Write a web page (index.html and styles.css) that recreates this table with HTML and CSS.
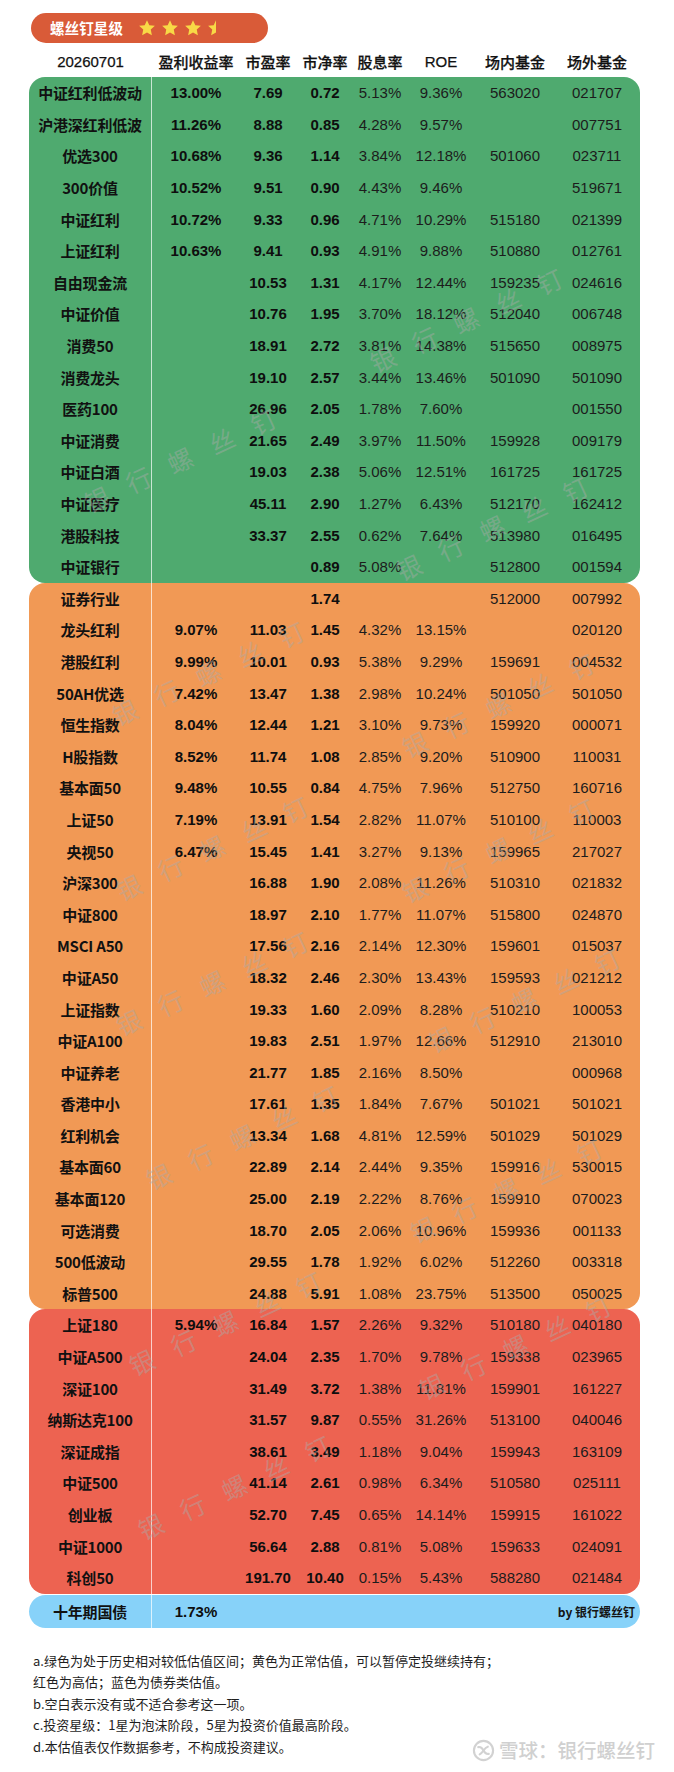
FILE: index.html
```html
<!DOCTYPE html>
<html lang="zh-CN">
<head>
<meta charset="utf-8">
<title>螺丝钉星级</title>
<link rel="stylesheet" href="styles.css">
</head>
<body>
<div class="page">
  <div class="badge">
    <span class="badge-title">螺丝钉星级</span>
    <span class="stars">
      <svg class="star" viewBox="0 0 24 24"><polygon points="12,1.5 15.1,8.3 22.5,9.1 17,14.1 18.5,21.8 12,17.9 5.5,21.8 7,14.1 1.5,9.1 8.9,8.3"/></svg>
      <svg class="star" viewBox="0 0 24 24"><polygon points="12,1.5 15.1,8.3 22.5,9.1 17,14.1 18.5,21.8 12,17.9 5.5,21.8 7,14.1 1.5,9.1 8.9,8.3"/></svg>
      <svg class="star" viewBox="0 0 24 24"><polygon points="12,1.5 15.1,8.3 22.5,9.1 17,14.1 18.5,21.8 12,17.9 5.5,21.8 7,14.1 1.5,9.1 8.9,8.3"/></svg>
      <svg class="star half" viewBox="0 0 24 24"><polygon points="12,1.5 12,17.9 5.5,21.8 7,14.1 1.5,9.1 8.9,8.3"/></svg>
    </span>
  </div>

  <div class="thead">
    <span>20260701</span><span>盈利收益率</span><span>市盈率</span><span>市净率</span><span>股息率</span><span>ROE</span><span>场内基金</span><span>场外基金</span>
  </div>

  <div class="block green">
    <div class="row"><span class="name">中证红利低波动</span><span class="b">13.00%</span><span class="b">7.69</span><span class="b">0.72</span><span>5.13%</span><span>9.36%</span><span>563020</span><span>021707</span></div>
    <div class="row"><span class="name">沪港深红利低波</span><span class="b">11.26%</span><span class="b">8.88</span><span class="b">0.85</span><span>4.28%</span><span>9.57%</span><span></span><span>007751</span></div>
    <div class="row"><span class="name">优选300</span><span class="b">10.68%</span><span class="b">9.36</span><span class="b">1.14</span><span>3.84%</span><span>12.18%</span><span>501060</span><span>023711</span></div>
    <div class="row"><span class="name">300价值</span><span class="b">10.52%</span><span class="b">9.51</span><span class="b">0.90</span><span>4.43%</span><span>9.46%</span><span></span><span>519671</span></div>
    <div class="row"><span class="name">中证红利</span><span class="b">10.72%</span><span class="b">9.33</span><span class="b">0.96</span><span>4.71%</span><span>10.29%</span><span>515180</span><span>021399</span></div>
    <div class="row"><span class="name">上证红利</span><span class="b">10.63%</span><span class="b">9.41</span><span class="b">0.93</span><span>4.91%</span><span>9.88%</span><span>510880</span><span>012761</span></div>
    <div class="row"><span class="name">自由现金流</span><span class="b"></span><span class="b">10.53</span><span class="b">1.31</span><span>4.17%</span><span>12.44%</span><span>159235</span><span>024616</span></div>
    <div class="row"><span class="name">中证价值</span><span class="b"></span><span class="b">10.76</span><span class="b">1.95</span><span>3.70%</span><span>18.12%</span><span>512040</span><span>006748</span></div>
    <div class="row"><span class="name">消费50</span><span class="b"></span><span class="b">18.91</span><span class="b">2.72</span><span>3.81%</span><span>14.38%</span><span>515650</span><span>008975</span></div>
    <div class="row"><span class="name">消费龙头</span><span class="b"></span><span class="b">19.10</span><span class="b">2.57</span><span>3.44%</span><span>13.46%</span><span>501090</span><span>501090</span></div>
    <div class="row"><span class="name">医药100</span><span class="b"></span><span class="b">26.96</span><span class="b">2.05</span><span>1.78%</span><span>7.60%</span><span></span><span>001550</span></div>
    <div class="row"><span class="name">中证消费</span><span class="b"></span><span class="b">21.65</span><span class="b">2.49</span><span>3.97%</span><span>11.50%</span><span>159928</span><span>009179</span></div>
    <div class="row"><span class="name">中证白酒</span><span class="b"></span><span class="b">19.03</span><span class="b">2.38</span><span>5.06%</span><span>12.51%</span><span>161725</span><span>161725</span></div>
    <div class="row"><span class="name">中证医疗</span><span class="b"></span><span class="b">45.11</span><span class="b">2.90</span><span>1.27%</span><span>6.43%</span><span>512170</span><span>162412</span></div>
    <div class="row"><span class="name">港股科技</span><span class="b"></span><span class="b">33.37</span><span class="b">2.55</span><span>0.62%</span><span>7.64%</span><span>513980</span><span>016495</span></div>
    <div class="row"><span class="name">中证银行</span><span class="b"></span><span class="b"></span><span class="b">0.89</span><span>5.08%</span><span></span><span>512800</span><span>001594</span></div>
  </div>

  <div class="block orange">
    <div class="row"><span class="name">证券行业</span><span class="b"></span><span class="b"></span><span class="b">1.74</span><span></span><span></span><span>512000</span><span>007992</span></div>
    <div class="row"><span class="name">龙头红利</span><span class="b">9.07%</span><span class="b">11.03</span><span class="b">1.45</span><span>4.32%</span><span>13.15%</span><span></span><span>020120</span></div>
    <div class="row"><span class="name">港股红利</span><span class="b">9.99%</span><span class="b">10.01</span><span class="b">0.93</span><span>5.38%</span><span>9.29%</span><span>159691</span><span>004532</span></div>
    <div class="row"><span class="name">50AH优选</span><span class="b">7.42%</span><span class="b">13.47</span><span class="b">1.38</span><span>2.98%</span><span>10.24%</span><span>501050</span><span>501050</span></div>
    <div class="row"><span class="name">恒生指数</span><span class="b">8.04%</span><span class="b">12.44</span><span class="b">1.21</span><span>3.10%</span><span>9.73%</span><span>159920</span><span>000071</span></div>
    <div class="row"><span class="name">H股指数</span><span class="b">8.52%</span><span class="b">11.74</span><span class="b">1.08</span><span>2.85%</span><span>9.20%</span><span>510900</span><span>110031</span></div>
    <div class="row"><span class="name">基本面50</span><span class="b">9.48%</span><span class="b">10.55</span><span class="b">0.84</span><span>4.75%</span><span>7.96%</span><span>512750</span><span>160716</span></div>
    <div class="row"><span class="name">上证50</span><span class="b">7.19%</span><span class="b">13.91</span><span class="b">1.54</span><span>2.82%</span><span>11.07%</span><span>510100</span><span>110003</span></div>
    <div class="row"><span class="name">央视50</span><span class="b">6.47%</span><span class="b">15.45</span><span class="b">1.41</span><span>3.27%</span><span>9.13%</span><span>159965</span><span>217027</span></div>
    <div class="row"><span class="name">沪深300</span><span class="b"></span><span class="b">16.88</span><span class="b">1.90</span><span>2.08%</span><span>11.26%</span><span>510310</span><span>021832</span></div>
    <div class="row"><span class="name">中证800</span><span class="b"></span><span class="b">18.97</span><span class="b">2.10</span><span>1.77%</span><span>11.07%</span><span>515800</span><span>024870</span></div>
    <div class="row"><span class="name">MSCI A50</span><span class="b"></span><span class="b">17.56</span><span class="b">2.16</span><span>2.14%</span><span>12.30%</span><span>159601</span><span>015037</span></div>
    <div class="row"><span class="name">中证A50</span><span class="b"></span><span class="b">18.32</span><span class="b">2.46</span><span>2.30%</span><span>13.43%</span><span>159593</span><span>021212</span></div>
    <div class="row"><span class="name">上证指数</span><span class="b"></span><span class="b">19.33</span><span class="b">1.60</span><span>2.09%</span><span>8.28%</span><span>510210</span><span>100053</span></div>
    <div class="row"><span class="name">中证A100</span><span class="b"></span><span class="b">19.83</span><span class="b">2.51</span><span>1.97%</span><span>12.66%</span><span>512910</span><span>213010</span></div>
    <div class="row"><span class="name">中证养老</span><span class="b"></span><span class="b">21.77</span><span class="b">1.85</span><span>2.16%</span><span>8.50%</span><span></span><span>000968</span></div>
    <div class="row"><span class="name">香港中小</span><span class="b"></span><span class="b">17.61</span><span class="b">1.35</span><span>1.84%</span><span>7.67%</span><span>501021</span><span>501021</span></div>
    <div class="row"><span class="name">红利机会</span><span class="b"></span><span class="b">13.34</span><span class="b">1.68</span><span>4.81%</span><span>12.59%</span><span>501029</span><span>501029</span></div>
    <div class="row"><span class="name">基本面60</span><span class="b"></span><span class="b">22.89</span><span class="b">2.14</span><span>2.44%</span><span>9.35%</span><span>159916</span><span>530015</span></div>
    <div class="row"><span class="name">基本面120</span><span class="b"></span><span class="b">25.00</span><span class="b">2.19</span><span>2.22%</span><span>8.76%</span><span>159910</span><span>070023</span></div>
    <div class="row"><span class="name">可选消费</span><span class="b"></span><span class="b">18.70</span><span class="b">2.05</span><span>2.06%</span><span>10.96%</span><span>159936</span><span>001133</span></div>
    <div class="row"><span class="name">500低波动</span><span class="b"></span><span class="b">29.55</span><span class="b">1.78</span><span>1.92%</span><span>6.02%</span><span>512260</span><span>003318</span></div>
    <div class="row"><span class="name">标普500</span><span class="b"></span><span class="b">24.88</span><span class="b">5.91</span><span>1.08%</span><span>23.75%</span><span>513500</span><span>050025</span></div>
  </div>

  <div class="block red">
    <div class="row"><span class="name">上证180</span><span class="b">5.94%</span><span class="b">16.84</span><span class="b">1.57</span><span>2.26%</span><span>9.32%</span><span>510180</span><span>040180</span></div>
    <div class="row"><span class="name">中证A500</span><span class="b"></span><span class="b">24.04</span><span class="b">2.35</span><span>1.70%</span><span>9.78%</span><span>159338</span><span>023965</span></div>
    <div class="row"><span class="name">深证100</span><span class="b"></span><span class="b">31.49</span><span class="b">3.72</span><span>1.38%</span><span>11.81%</span><span>159901</span><span>161227</span></div>
    <div class="row"><span class="name">纳斯达克100</span><span class="b"></span><span class="b">31.57</span><span class="b">9.87</span><span>0.55%</span><span>31.26%</span><span>513100</span><span>040046</span></div>
    <div class="row"><span class="name">深证成指</span><span class="b"></span><span class="b">38.61</span><span class="b">3.49</span><span>1.18%</span><span>9.04%</span><span>159943</span><span>163109</span></div>
    <div class="row"><span class="name">中证500</span><span class="b"></span><span class="b">41.14</span><span class="b">2.61</span><span>0.98%</span><span>6.34%</span><span>510580</span><span>025111</span></div>
    <div class="row"><span class="name">创业板</span><span class="b"></span><span class="b">52.70</span><span class="b">7.45</span><span>0.65%</span><span>14.14%</span><span>159915</span><span>161022</span></div>
    <div class="row"><span class="name">中证1000</span><span class="b"></span><span class="b">56.64</span><span class="b">2.88</span><span>0.81%</span><span>5.08%</span><span>159633</span><span>024091</span></div>
    <div class="row"><span class="name">科创50</span><span class="b"></span><span class="b">191.70</span><span class="b">10.40</span><span>0.15%</span><span>5.43%</span><span>588280</span><span>021484</span></div>
  </div>

  <div class="block blue">
    <div class="row bond"><span class="name">十年期国债</span><span class="b">1.73%</span><span class="by">by 银行螺丝钉</span></div>
  </div>

  <div class="notes">
    <p>a.绿色为处于历史相对较低估值区间；黄色为正常估值，可以暂停定投继续持有；</p>
    <p>红色为高估；蓝色为债券类估值。</p>
    <p>b.空白表示没有或不适合参考这一项。</p>
    <p>c.投资星级：1星为泡沫阶段，5星为投资价值最高阶段。</p>
    <p>d.本估值表仅作数据参考，不构成投资建议。</p>
  </div>

  <div class="xq">
    <svg class="xq-logo" viewBox="0 0 24 24"><circle cx="12" cy="12" r="10" fill="none" stroke="#d2d2d2" stroke-width="2.2"/><path d="M6.5 8.5 C9 8 11 10 12 12 C13 14 15 16 17.5 15.5" fill="none" stroke="#d2d2d2" stroke-width="2.2" stroke-linecap="round"/><path d="M8 16 C10 15 11 13.5 12 12 C13 10.5 14.5 8.5 16.5 8" fill="none" stroke="#d2d2d2" stroke-width="2.2" stroke-linecap="round"/></svg>
    <span>雪球：银行螺丝钉</span>
  </div>

  <span class="wm wm1">银行螺丝钉</span>
  <span class="wm wm2">银行螺丝钉</span>
  <span class="wm wm3">银行螺丝钉</span>
  <span class="wm wm4">银行螺丝钉</span>
  <span class="wm wm5">银行螺丝钉</span>
  <span class="wm wm6">银行螺丝钉</span>
  <span class="wm wm7">银行螺丝钉</span>
  <span class="wm wm8">银行螺丝钉</span>
  <span class="wm wm9">银行螺丝钉</span>
  <span class="wm wm10">银行螺丝钉</span>
  <span class="wm wm11">银行螺丝钉</span>
  <span class="wm wm12">银行螺丝钉</span>
  <span class="wm wm13">银行螺丝钉</span>
  <span class="wm wm14">银行螺丝钉</span>
</div>
</body>
</html>
```

FILE: styles.css
```css
* { box-sizing: border-box; }

html, body {
  margin: 0;
  padding: 0;
  background: #ffffff;
}

body {
  font-family: "Liberation Sans", "Noto Sans CJK SC", Arial, sans-serif;
  color: #141414;
}

.page {
  position: relative;
  width: 674px;
  min-height: 1772px;
  padding-top: 13px;
  overflow: hidden;
}

/* badge */
.badge {
  margin-left: 31px;
  width: 237px;
  height: 30px;
  border-radius: 15px;
  background: #d95b38;
  display: flex;
  align-items: center;
  padding-left: 19px;
}

.badge-title {
  color: #ffffff;
  font-family: "Noto Sans CJK SC", sans-serif;
  font-weight: 700;
  font-size: 14.5px;
  line-height: 1;
  letter-spacing: 0.1px;
}

.stars {
  display: flex;
  align-items: center;
  gap: 5px;
  margin-left: 15px;
}

.star {
  width: 18px;
  height: 18px;
  fill: #f8d946;
}

/* header */
.thead {
  margin-top: 3px;
  margin-left: 29px;
  width: 611px;
  height: 31px;
  display: grid;
  grid-template-columns: 123px 88px 56px 58px 52px 70px 78px 86px;
  align-items: center;
  text-align: center;
  font-size: 15px;
  font-weight: 500;
  color: #111;
  white-space: nowrap;
  -webkit-text-stroke: 0.25px #111;
}

/* blocks */
.block {
  margin-left: 29px;
  width: 611px;
  border-radius: 16px;
}

.green { background: #4faa6f; }
.orange { background: #f19955; }
.red { background: #ed6351; }
.blue {
  background: #87d2f9;
  margin-top: 1px;
  border-radius: 17px;
}

.row {
  display: grid;
  grid-template-columns: 123px 88px 56px 58px 52px 70px 78px 86px;
  height: 31.6px;
  align-items: center;
  text-align: center;
  font-size: 15px;
  color: #1c1c1c;
  white-space: nowrap;
}

.row .name {
  align-self: stretch;
  display: flex;
  align-items: center;
  justify-content: center;
  border-right: 1px solid rgba(255, 255, 255, 0.7);
  font-family: "Noto Sans CJK SC", sans-serif;
  font-weight: 700;
  color: #111;
  letter-spacing: -0.2px;
}

.row .b {
  font-weight: 700;
  color: #0e0e0e;
}

.row.bond {
  height: 33px;
}

.row .by {
  grid-column: 3 / 9;
  text-align: right;
  padding-right: 5px;
  font-family: "Noto Sans CJK SC", sans-serif;
  font-weight: 700;
  font-size: 12px;
  color: #141414;
}

/* notes */
.notes {
  margin-top: 22px;
  margin-left: 33px;
  font-family: "Noto Sans CJK SC", sans-serif;
  font-size: 13px;
  line-height: 21.5px;
  color: #1e1e1e;
}

.notes p {
  margin: 0;
}

/* xueqiu watermark */
.xq {
  position: absolute;
  left: 472px;
  top: 1738px;
  display: flex;
  align-items: center;
  gap: 4px;
  color: #d0d0d0;
  font-family: "Noto Sans CJK SC", sans-serif;
  font-weight: 500;
  font-size: 19.5px;
  line-height: 24px;
  pointer-events: none;
}

.xq-logo {
  width: 23px;
  height: 23px;
}

/* diagonal watermarks */
.wm {
  position: absolute;
  transform: translate(-50%, -50%) rotate(-25deg);
  font-family: "Noto Sans CJK SC", sans-serif;
  font-weight: 400;
  font-size: 25px;
  letter-spacing: 21px;
  padding-left: 21px;
  color: rgba(170, 170, 170, 0.45);
  white-space: nowrap;
  pointer-events: none;
  line-height: 1;
}

.wm1 { left: 466px; top: 320px; }
.wm2 { left: 180px; top: 460px; }
.wm3 { left: 492px; top: 528px; }
.wm4 { left: 208px; top: 673px; }
.wm5 { left: 498px; top: 705px; }
.wm6 { left: 212px; top: 848px; }
.wm7 { left: 498px; top: 850px; }
.wm8 { left: 212px; top: 983px; }
.wm9 { left: 524px; top: 1000px; }
.wm10 { left: 242px; top: 1137px; }
.wm11 { left: 506px; top: 1190px; }
.wm12 { left: 225px; top: 1323px; }
.wm13 { left: 515px; top: 1347px; }
.wm14 { left: 234px; top: 1487px; }
```
